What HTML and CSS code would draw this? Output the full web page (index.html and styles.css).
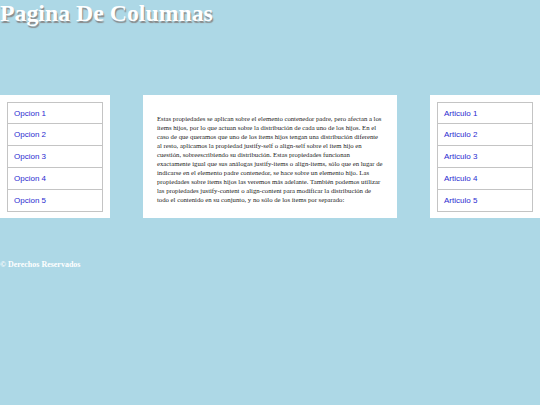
FILE: index.html
```html
<!DOCTYPE html>
<html lang="es">
<head>
<meta charset="utf-8">
<title>Pagina De Columnas</title>
<link rel="stylesheet" href="styles.css">
</head>
<body>
<header class="header">
  <h1 class="title">Pagina De Columnas</h1>
</header>
<main class="columns">
  <nav class="box side">
    <ul class="menu">
      <li class="menu-item"><a href="#">Opcion 1</a></li>
      <li class="menu-item"><a href="#">Opcion 2</a></li>
      <li class="menu-item"><a href="#">Opcion 3</a></li>
      <li class="menu-item"><a href="#">Opcion 4</a></li>
      <li class="menu-item"><a href="#">Opcion 5</a></li>
    </ul>
  </nav>
  <section class="box content">
    <p class="text">Estas propiedades se aplican sobre el elemento contenedor padre, pero afectan a los ítems hijos, por lo que actuan sobre la distribución de cada uno de los hijos. En el caso de que queramos que uno de los ítems hijos tengan una distribución diferente al resto, aplicamos la propiedad justify-self o align-self sobre el ítem hijo en cuestión, sobreescribiendo su distribución. Estas propiedades funcionan exactamente igual que sus análogas justify-items o align-items, sólo que en lugar de indicarse en el elemento padre contenedor, se hace sobre un elemento hijo. Las propiedades sobre ítems hijos las veremos más adelante. También podemos utilizar las propiedades justify-content o align-content para modificar la distribución de todo el contenido en su conjunto, y no sólo de los ítems por separado:</p>
  </section>
  <aside class="box side">
    <ul class="menu">
      <li class="menu-item"><a href="#">Articulo 1</a></li>
      <li class="menu-item"><a href="#">Articulo 2</a></li>
      <li class="menu-item"><a href="#">Articulo 3</a></li>
      <li class="menu-item"><a href="#">Articulo 4</a></li>
      <li class="menu-item"><a href="#">Articulo 5</a></li>
    </ul>
  </aside>
</main>
<footer class="footer">© Derechos Reservados</footer>
</body>
</html>
```

FILE: styles.css
```css
html, body {
  margin: 0;
  padding: 0;
}
body {
  background: #add8e6;
  width: 540px;
  height: 405px;
  font-family: "Liberation Serif", "Times New Roman", serif;
}
.header {
  height: 95px;
}
.title {
  margin: 0;
  font-size: 23.8px;
  line-height: 26px;
  font-weight: bold;
  color: #ffffff;
  text-shadow: 1px 2px 1px #8a8a8a;
}
.columns {
  display: grid;
  grid-template-columns: 110px 1fr 110px;
  column-gap: 33px;
  height: 123px;
}
.box {
  background: #ffffff;
  box-sizing: border-box;
  height: 123px;
}
.side {
  padding: 7px 7px 6px 7px;
}
.menu {
  list-style: none;
  margin: 0;
  padding: 0;
}
.menu-item {
  height: 22px;
  border: 1px solid #c4c4c4;
  border-top-width: 0;
  box-sizing: border-box;
  display: flex;
  align-items: center;
  padding-left: 6px;
  font-family: "Liberation Sans", Arial, sans-serif;
  font-size: 8px;
}
.menu-item:first-child {
  border-top-width: 1px;
}
.menu-item a {
  color: #2a2ad0;
  text-decoration: none;
}
.content {
  padding: 19px 14px 13px 14px;
}
.text {
  margin: 0;
  font-size: 6.72px;
  line-height: 9px;
  color: #222222;
}
.footer {
  margin-top: 42px;
  font-size: 8px;
  font-weight: bold;
  color: #ffffff;
}
```
